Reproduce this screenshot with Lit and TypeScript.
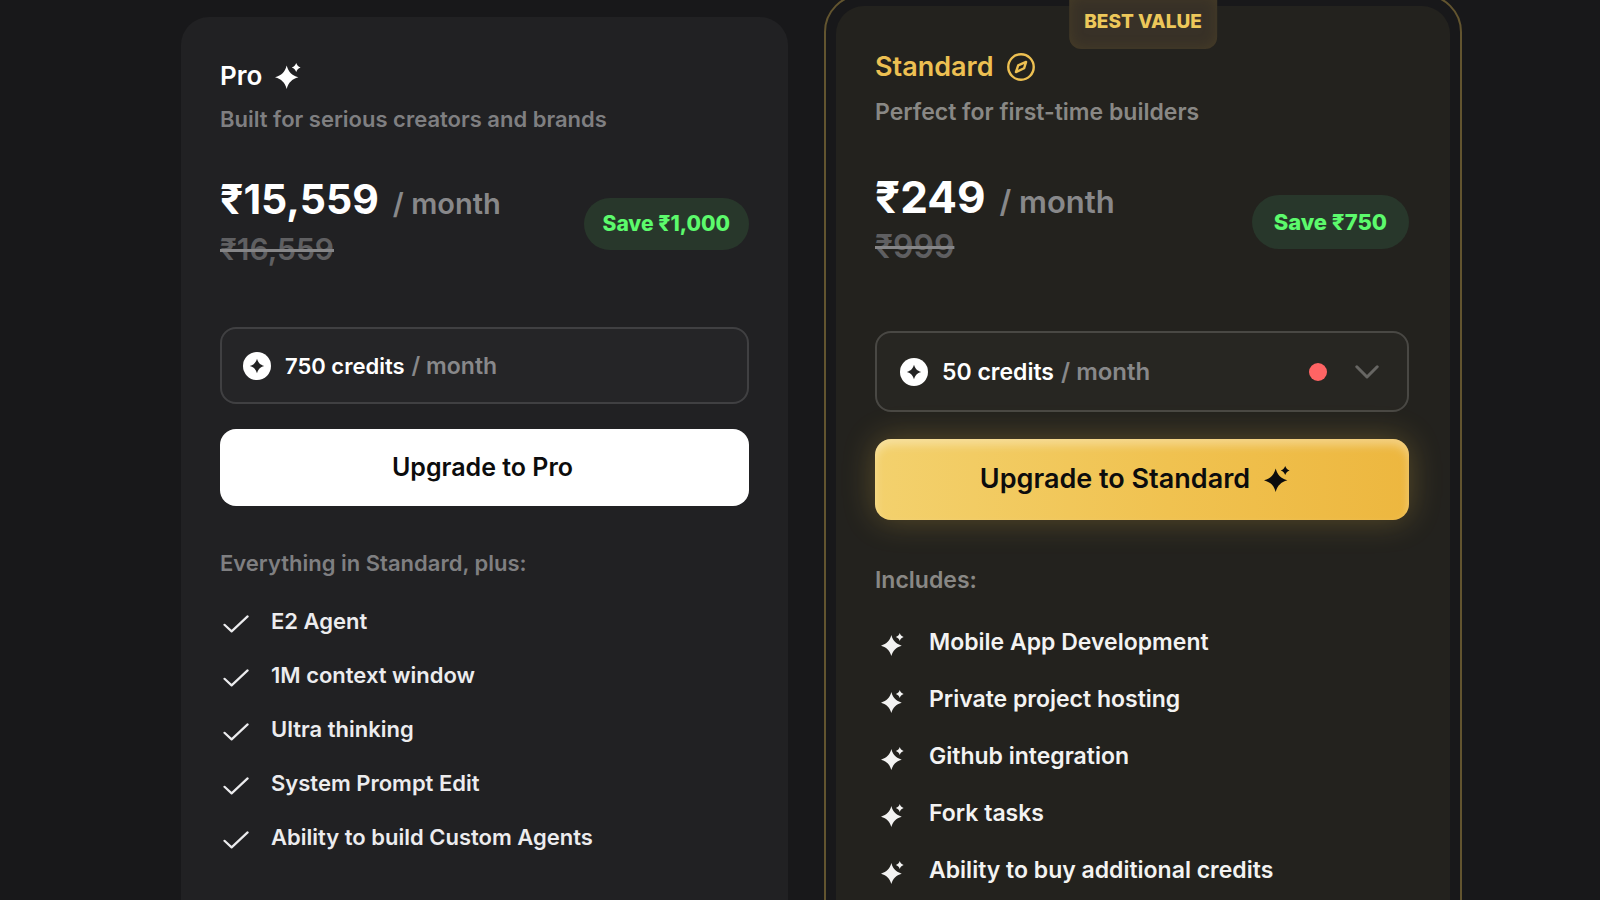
import { LitElement, html, css, svg, nothing } from "lit";
import { customElement, property } from "lit/decorators.js";

interface Plan {
  id: string;
  name: string;
  tagline: string;
  price: string;
  oldPrice: string;
  saving: string;
  credits: string[];
  listTitle: string;
  features: string[];
  featured: boolean;
}

const plans: Plan[] = [
  {
    id: "pro",
    name: "Pro",
    tagline: "Built for serious creators and brands",
    price: "₹15,559",
    oldPrice: "₹16,559",
    saving: "Save ₹1,000",
    credits: ["750 credits"],
    listTitle: "Everything in Standard, plus:",
    features: [
      "E2 Agent",
      "1M context window",
      "Ultra thinking",
      "System Prompt Edit",
      "Ability to build Custom Agents",
    ],
    featured: false,
  },
  {
    id: "standard",
    name: "Standard",
    tagline: "Perfect for first-time builders",
    price: "₹249",
    oldPrice: "₹999",
    saving: "Save ₹750",
    credits: ["50 credits", "100 credits", "250 credits"],
    listTitle: "Includes:",
    features: [
      "Mobile App Development",
      "Private project hosting",
      "Github integration",
      "Fork tasks",
      "Ability to buy additional credits",
    ],
    featured: true,
  },
];

const sparkle = html`<svg class="sparkle" viewBox="0 0 26 26" aria-hidden="true">
  ${svg`<path fill="currentColor" d="M11.7 2.4C13.7 9.3 16.7 12.2 23.4 14.3C16.7 16.4 13.7 19.3 11.7 26C9.7 19.3 6.7 16.4 0 14.3C6.7 12.2 9.7 9.3 11.7 2.4Z"/>
  <path fill="currentColor" d="M21.2 0C22.1 2.5 23.1 3.5 25.6 4.5C23.1 5.5 22.1 6.5 21.2 9C20.3 6.5 19.3 5.5 16.8 4.5C19.3 3.5 20.3 2.5 21.2 0Z"/>`}
</svg>`;

const compass = html`<svg class="compass" viewBox="1 1 22 22" aria-hidden="true">
  ${svg`<g fill="none" stroke="currentColor" stroke-width="1.9" stroke-linejoin="round">
    <circle cx="12" cy="12" r="10"/>
    <path d="M16 8L14.4 13L8 16L9.8 10.8Z"/>
  </g>`}
</svg>`;

const coin = html`<svg class="coin" viewBox="0 0 28 28" aria-hidden="true">
  ${svg`<circle cx="14" cy="14" r="14" fill="#fff"/>
  <path fill="#232323" d="M14 6.8C15.4 11 17 12.6 21.2 14C17 15.4 15.4 17 14 21.2C12.6 17 11 15.4 6.8 14C11 12.6 12.6 11 14 6.8Z"/>`}
</svg>`;

const tick = html`<svg class="tick" viewBox="0 0 26 18" aria-hidden="true">
  ${svg`<path fill="none" stroke="currentColor" stroke-width="2.2" stroke-linecap="round" stroke-linejoin="round" d="M1.5 9.8L8.6 16.4L24.6 1.4"/>`}
</svg>`;

const chevron = html`<svg class="chevron" viewBox="0 0 24 14" aria-hidden="true">
  ${svg`<path fill="none" stroke="currentColor" stroke-width="3" stroke-linecap="round" stroke-linejoin="round" d="M1.8 1.8L12 12L22.2 1.8"/>`}
</svg>`;

@customElement("plan-card")
export class PlanCard extends LitElement {
  @property({ attribute: false }) plan!: Plan;

  static styles = css`
    :host {
      display: block;
      box-sizing: border-box;
      font-weight: 600;
    }
    * {
      box-sizing: border-box;
    }
    svg {
      display: block;
      flex: none;
    }
    h2,
    h3,
    p,
    ul {
      margin: 0;
      padding: 0;
    }
    .frame {
      height: 100%;
    }
    .frame.featured {
      position: relative;
      padding: 10px;
      border: 2px solid #62542f;
      border-radius: 38px;
    }
    .badge {
      position: absolute;
      z-index: 1;
      top: 0;
      left: 50%;
      transform: translateX(-50%);
      padding: 14px 15px 15px;
      border-radius: 0 0 12px 12px;
      background: #383127;
      box-shadow: inset 0 0 14px rgba(120, 98, 38, 0.25);
      color: #edc85a;
      font-size: 19px;
      line-height: 24px;
      font-weight: 800;
      white-space: nowrap;
    }
    .card {
      height: 100%;
      padding: 42px 39px 40px;
      border-radius: 28px;
      background: #212123;
    }
    .featured .card {
      padding: 44px 41px 40px 39px;
      background: #23221e;
    }
    .title {
      display: flex;
      align-items: center;
      gap: 13px;
      color: #fff;
      font-size: 26px;
      line-height: 34px;
      font-weight: 600;
    }
    .featured .title {
      color: #edc052;
      font-size: 27px;
    }
    .sparkle {
      width: 26px;
      height: 26px;
    }
    .compass {
      width: 28px;
      height: 28px;
    }
    .tagline {
      margin-top: 12px;
      color: #7f7f81;
      font-size: 22px;
      line-height: 28px;
    }
    .featured .tagline {
      margin-top: 14px;
      color: #898885;
      font-size: 23px;
    }
    .pricing {
      display: flex;
      align-items: center;
      justify-content: space-between;
      margin-top: 41px;
    }
    .featured .pricing {
      margin-top: 46px;
    }
    .amount {
      display: flex;
      align-items: baseline;
      gap: 14px;
      color: #fff;
      font-size: 41px;
      line-height: 50px;
      font-weight: 700;
    }
    .per {
      color: #88888a;
      font-size: 29px;
      line-height: 30px;
      font-weight: 600;
    }
    .old {
      display: block;
      color: #858587;
      font-size: 30px;
      line-height: 50px;
    }
    .old span {
      color: #5f5f61;
    }
    .featured .amount {
      font-size: 44px;
    }
    .featured .per {
      font-size: 31px;
    }
    .featured .old {
      font-size: 32px;
    }
    .save {
      padding: 12px 19px;
      border-radius: 27px;
      background: #28372b;
      color: #5cfa6c;
      font-size: 21px;
      line-height: 28px;
      font-weight: 800;
      white-space: nowrap;
    }
    .featured .save {
      padding: 13px 22px;
      font-size: 22px;
    }
    .credits {
      display: flex;
      align-items: center;
      gap: 14px;
      height: 77px;
      margin-top: 53px;
      padding: 0 28px 0 21px;
      border: 2px solid #404042;
      border-radius: 16px;
      background: #252527;
      color: #fff;
      font-size: 22px;
      line-height: 28px;
    }
    .featured .credits {
      height: 81px;
      margin-top: 59px;
      padding-left: 23px;
      border-color: #494844;
      background: #272622;
      font-size: 23px;
    }
    .coin {
      width: 28px;
      height: 28px;
    }
    .quota {
      display: flex;
      flex: 1;
      align-items: baseline;
      gap: 7px;
    }
    .muted {
      color: #88888a;
      font-size: 23px;
    }
    .featured .muted {
      font-size: 24px;
    }
    select {
      field-sizing: content;
      appearance: none;
      margin: 0;
      padding: 0;
      border: 0;
      background: none;
      color: inherit;
      font: inherit;
      cursor: pointer;
    }
    .dot {
      width: 18px;
      height: 18px;
      margin-right: 14px;
      border-radius: 50%;
      background: #ff6464;
    }
    .chevron {
      width: 24px;
      height: 14px;
      color: #676663;
    }
    .upgrade {
      display: flex;
      align-items: center;
      justify-content: center;
      gap: 14px;
      width: 100%;
      height: 77px;
      margin-top: 25px;
      padding: 0 14px 2px 10px;
      border: 0;
      border-radius: 16px;
      background: #fff;
      color: #0c0c0d;
      font: inherit;
      font-size: 25px;
      font-weight: 600;
      cursor: pointer;
    }
    .featured .upgrade {
      height: 81px;
      margin-top: 27px;
      padding: 0 14px 2px 0;
      background: linear-gradient(90deg, #f3d16d, #f0c250 55%, #edb73f);
      box-shadow:
        inset 0 6px 10px rgba(255, 255, 255, 0.35),
        0 0 32px rgba(237, 190, 70, 0.28);
      font-size: 27px;
    }
    h3 {
      margin-top: 43px;
      color: #7f7f81;
      font-size: 22px;
      line-height: 28px;
      font-weight: 600;
    }
    .featured h3 {
      margin-top: 46px;
      color: #898885;
      font-size: 23px;
    }
    ul {
      display: grid;
      gap: 26px;
      margin-top: 30px;
      list-style: none;
      color: #ececee;
      font-size: 22px;
      line-height: 28px;
    }
    .featured ul {
      gap: 29px;
      margin-top: 34px;
      color: #f3f3f2;
      font-size: 23px;
    }
    li {
      display: flex;
      align-items: center;
      gap: 22px;
    }
    .featured li {
      gap: 25px;
    }
    .tick {
      width: 26px;
      height: 18px;
      margin: 5px 0 0 3px;
    }
    li .sparkle {
      width: 23px;
      height: 23px;
      margin: 5px 0 0 6px;
    }
  `;

  render() {
    const p = this.plan;
    return html`<div class="frame ${p.featured ? "featured" : ""}">
      ${p.featured ? html`<span class="badge">BEST VALUE</span>` : nothing}
      <article class="card">
        <h2 class="title">${p.name} ${p.featured ? compass : sparkle}</h2>
        <p class="tagline">${p.tagline}</p>
        <div class="pricing">
          <div>
            <p class="amount">${p.price}<span class="per">/ month</span></p>
            <s class="old"><span>${p.oldPrice}</span></s>
          </div>
          <span class="save">${p.saving}</span>
        </div>
        <div class="credits">
          ${coin}
          <div class="quota">
            ${p.credits.length > 1
              ? html`<select aria-label="Monthly credits">
                  ${p.credits.map((c) => html`<option>${c}</option>`)}
                </select>`
              : html`<span>${p.credits[0]}</span>`}
            <span class="muted">/ month</span>
          </div>
          ${p.credits.length > 1 ? html`<span class="dot"></span>${chevron}` : nothing}
        </div>
        <button class="upgrade" type="button">
          Upgrade to ${p.name} ${p.featured ? sparkle : nothing}
        </button>
        <h3>${p.listTitle}</h3>
        <ul>
          ${p.features.map((f) => html`<li>${p.featured ? sparkle : tick}<span>${f}</span></li>`)}
        </ul>
      </article>
    </div>`;
  }
}

@customElement("app-root")
export class AppRoot extends LitElement {
  static styles = css`
    :host {
      display: block;
      box-sizing: border-box;
      height: 100vh;
      overflow: hidden;
      background: #18181a;
      font-family: Inter, "Liberation Sans", sans-serif;
    }
    .plans {
      display: grid;
      grid-template-columns: 607fr 638fr;
      gap: 36px;
      min-height: calc(100% + 60px);
      padding: 0 138px 0 181px;
      box-sizing: border-box;
    }
    .plain {
      margin-top: 17px;
    }
    .raised {
      margin-top: -6px;
    }
  `;

  render() {
    return html`<main class="plans">
      ${plans.map(
        (p) => html`<plan-card class=${p.featured ? "raised" : "plain"} .plan=${p}></plan-card>`,
      )}
    </main>`;
  }
}
